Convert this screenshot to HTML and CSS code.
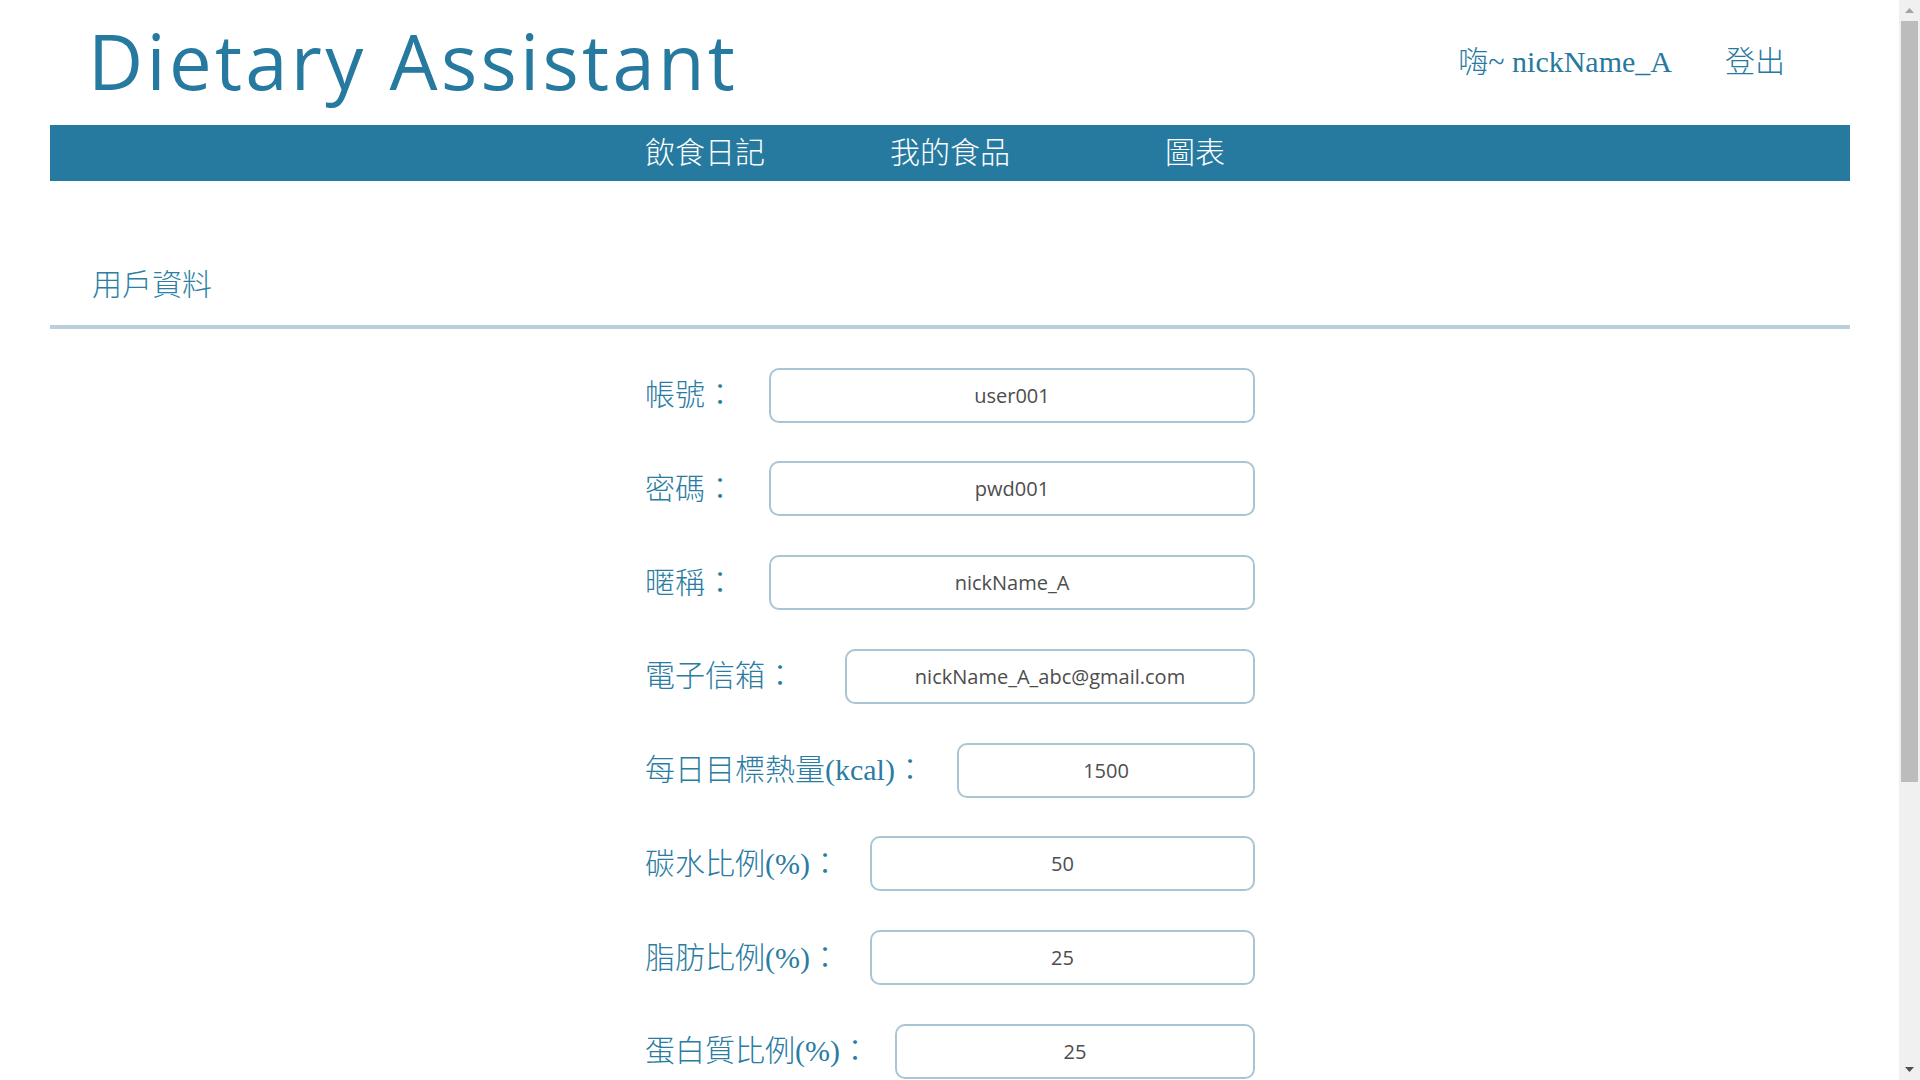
FILE: index.html
```html
<!DOCTYPE html>
<html lang="zh-Hant">
<head>
<meta charset="utf-8">
<title>Dietary Assistant</title>
<link rel="stylesheet" href="styles.css">
</head>
<body>
<div class="page">
  <header class="header">
    <h1 class="brand">Dietary Assistant</h1>
    <div class="user">
      <span class="greet">嗨~ nickName_A</span>
      <a class="logout">登出</a>
    </div>
  </header>
  <nav class="nav">
    <a class="nav-item">飲食日記</a>
    <a class="nav-item">我的食品</a>
    <a class="nav-item">圖表</a>
  </nav>
  <main>
    <h2 class="section-title">用戶資料</h2>
    <form class="profile">
      <div class="row"><label class="label">帳號：</label><input class="field field-xl" type="text" value="user001"></div>
      <div class="row"><label class="label">密碼：</label><input class="field field-xl" type="text" value="pwd001"></div>
      <div class="row"><label class="label">暱稱：</label><input class="field field-xl" type="text" value="nickName_A"></div>
      <div class="row"><label class="label">電子信箱：</label><input class="field field-lg" type="text" value="nickName_A_abc@gmail.com"></div>
      <div class="row"><label class="label">每日目標熱量(kcal)：</label><input class="field field-xs" type="text" value="1500"></div>
      <div class="row"><label class="label">碳水比例(%)：</label><input class="field field-md" type="text" value="50"></div>
      <div class="row"><label class="label">脂肪比例(%)：</label><input class="field field-md" type="text" value="25"></div>
      <div class="row"><label class="label">蛋白質比例(%)：</label><input class="field field-sm" type="text" value="25"></div>
    </form>
  </main>
</div>
<div class="scrollbar" aria-hidden="true">
  <div class="sb-btn">
    <svg width="9" height="5" viewBox="0 0 9 5"><polygon points="4.5,0 9,5 0,5" fill="#a3a3a3"/></svg>
  </div>
  <div class="sb-track"><div class="sb-thumb"></div></div>
  <div class="sb-btn">
    <svg width="9" height="5" viewBox="0 0 9 5"><polygon points="0,0 9,0 4.5,5" fill="#505050"/></svg>
  </div>
</div>
</body>
</html>
```

FILE: styles.css
```css
body {
  margin: 0;
  background: #ffffff;
  font-family: "Liberation Serif", "Noto Sans CJK TC", serif;
  color: #28799f;
}

.page {
  width: 1800px;
  margin-left: 50px;
}

.header {
  display: flex;
  justify-content: space-between;
  align-items: flex-start;
  height: 125px;
}

.brand {
  margin: 23px 0 0 38px;
  font-family: "Open Sans", sans-serif;
  font-weight: 400;
  font-size: 76px;
  line-height: 76px;
  letter-spacing: 3.3px;
  color: #26799f;
}

.user {
  display: flex;
  gap: 53px;
  margin: 47px 65px 0 0;
  font-size: 30px;
  line-height: 30px;
  font-weight: 300;
  color: #28799f;
}

.logout {
  cursor: pointer;
}

.nav {
  display: flex;
  justify-content: center;
  height: 56px;
  background: #267aa0;
}

.nav-item {
  width: 245px;
  text-align: center;
  font-size: 30px;
  font-weight: 300;
  line-height: 56px;
  color: #ffffff;
  cursor: pointer;
}

.section-title {
  margin: 84px 0 0;
  padding: 0 0 20px 42px;
  font-size: 30px;
  font-weight: 300;
  line-height: 40px;
  color: #2c7fa4;
  border-bottom: 4px solid #b9d0dc;
}

.profile {
  display: flex;
  flex-direction: column;
  gap: 38.75px;
  width: 610px;
  margin: 38.7px auto 0;
  padding-bottom: 394px;
}

.row {
  display: flex;
  justify-content: space-between;
  align-items: center;
  height: 55px;
}

.label {
  font-size: 30px;
  font-weight: 300;
  line-height: 40px;
  color: #2a7ca2;
  white-space: nowrap;
}

.field {
  box-sizing: border-box;
  height: 55px;
  padding: 0;
  border: 2px solid #a9c5d4;
  border-radius: 10px;
  background: #ffffff;
  font-family: "Open Sans", sans-serif;
  font-size: 20px;
  color: #4d4d4d;
  text-align: center;
  outline: none;
}

.field-xl { width: 486px; }
.field-lg { width: 410px; }
.field-md { width: 385px; }
.field-sm { width: 360px; }
.field-xs { width: 298px; }

/* browser-style vertical scrollbar overlay at the right edge */
.scrollbar {
  position: fixed;
  top: 0;
  right: 0;
  width: 21px;
  height: 100vh;
  display: flex;
  flex-direction: column;
  background: #f0f0f0;
}

.sb-btn {
  height: 21px;
  display: flex;
  align-items: center;
  justify-content: center;
}

.sb-btn svg {
  display: block;
}

.sb-track {
  flex: 1;
  padding: 0 2px;
}

.sb-thumb {
  height: 761px;
  background: #bcbcbc;
}
```
